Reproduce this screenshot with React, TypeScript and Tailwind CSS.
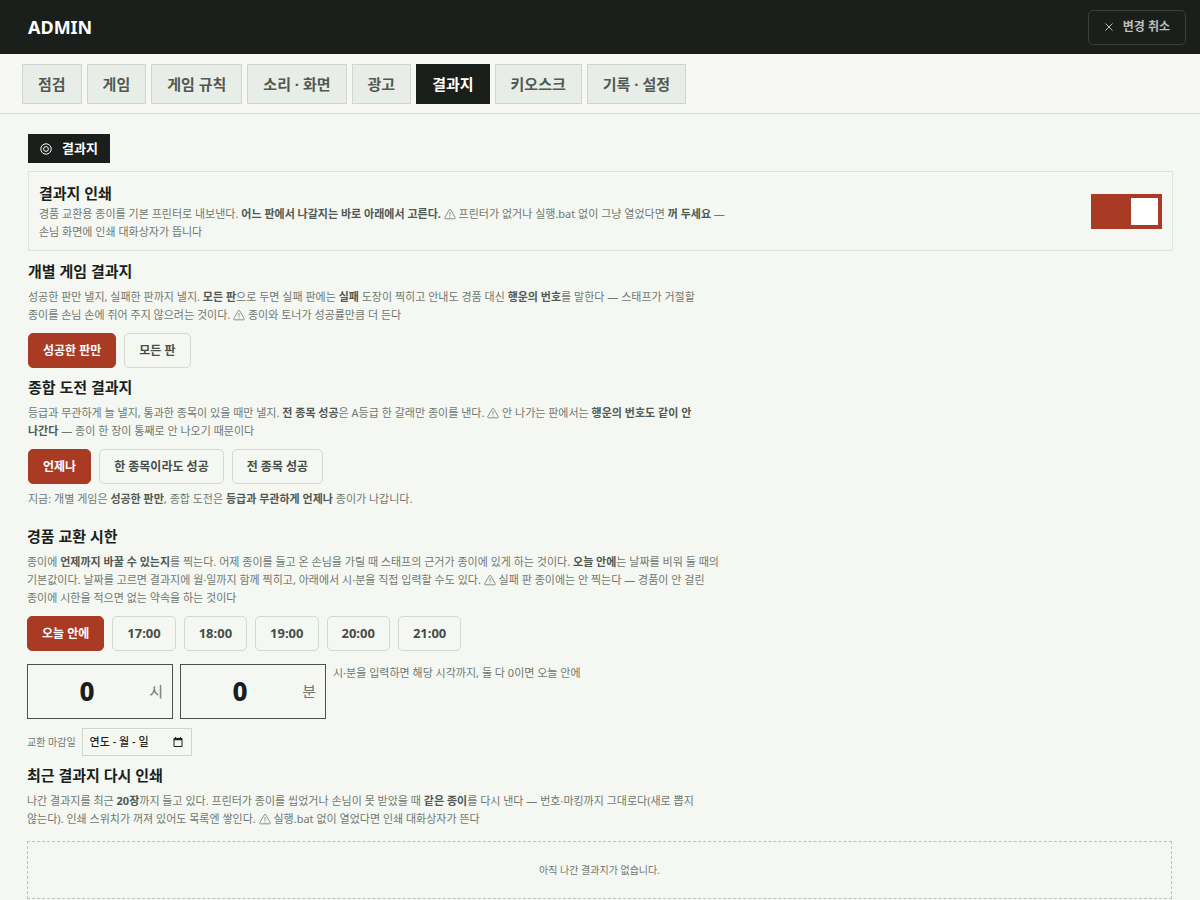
import { useState } from "react";
import type { ReactNode } from "react";

const tabs = ["점검", "게임", "게임 규칙", "소리 · 화면", "광고", "결과지", "키오스크", "기록 · 설정"];

const singleModes = ["성공한 판만", "모든 판"];
const totalModes = ["언제나", "한 종목이라도 성공", "전 종목 성공"];
const deadlines = ["오늘 안에", "17:00", "18:00", "19:00", "20:00", "21:00"];

// How each total mode reads in the summary sentence
const totalSummary: Record<string, string> = {
  "언제나": "등급과 무관하게 언제나",
  "한 종목이라도 성공": "한 종목이라도 성공하면",
  "전 종목 성공": "전 종목 성공일 때만",
};

const WarnIcon = () => (
  <svg
    viewBox="0 0 12 12"
    className="inline-block size-3 align-[-2px]"
    fill="none"
    stroke="currentColor"
    strokeWidth="0.8"
    strokeLinejoin="round"
    role="img"
    aria-label="주의"
  >
    <path d="M5.4 1.6Q6 .7 6.6 1.6L11.2 9.6Q11.6 10.7 10.6 10.8H1.4Q.4 10.7.8 9.6Z" />
    <path d="M6 4v3.6M6 8.6v1" />
  </svg>
);

const Strong = ({ children }: { children: ReactNode }) => (
  <strong className="font-bold text-[#505952]">{children}</strong>
);

const Title = ({ children }: { children: ReactNode }) => (
  <h2 className="text-[15px] leading-[22px] font-bold text-[#1a1f1b]">{children}</h2>
);

const Desc = ({ children }: { children: ReactNode }) => (
  <p className="mt-[6px] max-w-[694px] text-[11px] leading-[18px] break-keep text-[#6f7771]">{children}</p>
);

type ChoicesProps = {
  label: string;
  options: string[];
  value: string;
  onChange: (value: string) => void;
};

const Choices = ({ label, options, value, onChange }: ChoicesProps) => (
  <div role="group" aria-label={label} className="mt-[9px] flex flex-wrap gap-2">
    {options.map((option) => (
      <button
        key={option}
        type="button"
        aria-pressed={option === value}
        onClick={() => onChange(option)}
        className={`h-[35px] rounded-[5px] border px-[14px] font-bold ${
          option.includes(":") ? "text-[13px]" : "text-xs"
        } ${
          option === value
            ? "border-[#a93b24] bg-[#a93b24] text-white"
            : "border-[#d3d8d1] text-[#464e48]"
        }`}
      >
        {option}
      </button>
    ))}
  </div>
);

type TimeFieldProps = {
  unit: string;
  value: string;
  onChange: (value: string) => void;
};

const TimeField = ({ unit, value, onChange }: TimeFieldProps) => (
  <label className="flex h-[55px] w-[146px] items-center gap-3 border border-[#4b504c] px-[9px]">
    <input
      type="text"
      inputMode="numeric"
      value={value}
      onChange={(e) => onChange(e.target.value)}
      className="w-full min-w-0 bg-transparent text-center text-[26px] font-extrabold text-[#1a1f1b] outline-none"
    />
    <span className="text-[15px] text-[#6f7771]">{unit}</span>
  </label>
);

const App = () => {
  const [tab, setTab] = useState("결과지");
  const [printing, setPrinting] = useState(true);
  const [singleMode, setSingleMode] = useState("성공한 판만");
  const [totalMode, setTotalMode] = useState("언제나");
  const [deadline, setDeadline] = useState("오늘 안에");
  const [hour, setHour] = useState("0");
  const [minute, setMinute] = useState("0");
  const [date, setDate] = useState("");

  return (
    <div className="min-h-screen bg-[#f5f7f2] font-['Noto_Sans','Noto_Sans_CJK_KR',sans-serif]">
      <header className="flex h-[54px] items-center justify-between bg-[#1a1f1b] pr-[14px] pl-7">
        <h1 className="text-lg font-bold text-white">ADMIN</h1>
        <button
          type="button"
          className="flex h-[35px] items-center gap-[9px] rounded-[5px] border border-[#3a3f3b] px-[15px] text-xs font-bold text-[#bcbfbb]"
        >
          <svg viewBox="0 0 10 10" className="size-[10px]" fill="none" stroke="currentColor" aria-hidden="true">
            <path d="M1.5 1.5l7 7M8.5 1.5l-7 7" />
          </svg>
          변경 취소
        </button>
      </header>

      <nav className="flex flex-wrap gap-[5px] border-b border-[#d6dad4] bg-[#f7f8f4] px-[22px] pt-[10px] pb-[9px]">
        {tabs.map((name) => (
          <button
            key={name}
            type="button"
            onClick={() => setTab(name)}
            className={`h-10 border px-[15px] text-[15px] font-bold ${
              name === tab
                ? "border-[#1a1f1b] bg-[#1a1f1b] text-white"
                : "border-[#d0d5ce] bg-[#e9ede7] text-[#505952]"
            }`}
          >
            {name}
          </button>
        ))}
      </nav>

      <main className="pt-5">
        <div className="pr-[27px] pl-7">
          <div className="inline-flex h-[29px] items-center gap-[10px] bg-[#1a1f1b] px-3 text-[13px] font-bold text-white">
            <svg viewBox="0 0 12 12" className="size-3" fill="none" stroke="currentColor" aria-hidden="true">
              <circle cx="6" cy="6" r="5.2" />
              <circle cx="6" cy="6" r="2.4" />
            </svg>
            결과지
          </div>

          {/* Print on/off */}
          <section className="mt-2 flex items-center justify-between gap-4 border border-[#dfe3dd] px-[10px] pt-[10px] pb-[9px]">
            <div>
              <h2 id="print-title" className="text-[15px] leading-[22px] font-bold text-[#1a1f1b]">
                결과지 인쇄
              </h2>
              <p className="mt-px max-w-[694px] text-[11px] leading-[18px] break-keep text-[#6f7771]">
                경품 교환용 종이를 기본 프린터로 내보낸다.{" "}
                <Strong>어느 판에서 나갈지는 바로 아래에서 고른다.</Strong> <WarnIcon /> 프린터가
                없거나 실행.bat 없이 그냥 열었다면 <Strong>꺼 두세요</Strong> — 손님 화면에 인쇄
                대화상자가 뜹니다
              </p>
            </div>
            <input
              type="checkbox"
              role="switch"
              aria-labelledby="print-title"
              checked={printing}
              onChange={(e) => setPrinting(e.target.checked)}
              className="flex h-[35px] w-[71px] shrink-0 appearance-none items-center bg-[#b9beb8] px-1 before:size-[27px] before:bg-white checked:justify-end checked:bg-[#a93b24]"
            />
          </section>

          <section className="mt-[9px]">
            <Title>개별 게임 결과지</Title>
            <Desc>
              성공한 판만 낼지, 실패한 판까지 낼지. <Strong>모든 판</Strong>으로 두면 실패 판에는{" "}
              <Strong>실패</Strong> 도장이 찍히고 안내도 경품 대신 <Strong>행운의 번호</Strong>를
              말한다 — 스태프가 거절할 종이를 손님 손에 쥐어 주지 않으려는 것이다. <WarnIcon /> 종이와
              토너가 성공률만큼 더 든다
            </Desc>
            <Choices label="개별 게임 결과지" options={singleModes} value={singleMode} onChange={setSingleMode} />
          </section>

          <section className="mt-2">
            <Title>종합 도전 결과지</Title>
            <Desc>
              등급과 무관하게 늘 낼지, 통과한 종목이 있을 때만 낼지. <Strong>전 종목 성공</Strong>은
              A등급 한 갈래만 종이를 낸다. <WarnIcon /> 안 나가는 판에서는{" "}
              <Strong>행운의 번호도 같이 안 나간다</Strong> — 종이 한 장이 통째로 안 나오기 때문이다
            </Desc>
            <Choices label="종합 도전 결과지" options={totalModes} value={totalMode} onChange={setTotalMode} />
            <Desc>
              지금: 개별 게임은 <Strong>{singleMode}</Strong>, 종합 도전은{" "}
              <Strong>{totalSummary[totalMode]}</Strong> 종이가 나갑니다.
            </Desc>
          </section>
        </div>

        <div className="pr-7 pl-[27px]">
          {/* Prize deadline */}
          <section className="mt-[17px]">
            <Title>경품 교환 시한</Title>
            <Desc>
              종이에 <Strong>언제까지 바꿀 수 있는지</Strong>를 찍는다. 어제 종이를 들고 온 손님을
              가릴 때 스태프의 근거가 종이에 있게 하는 것이다. <Strong>오늘 안에</Strong>는 날짜를
              비워 둘 때의 기본값이다. 날짜를 고르면 결과지에 월·일까지 함께 찍히고, 아래에서 시·분을
              직접 입력할 수도 있다. <WarnIcon /> 실패 판 종이에는 안 찍는다 — 경품이 안 걸린 종이에
              시한을 적으면 없는 약속을 하는 것이다
            </Desc>
            <Choices label="경품 교환 시한" options={deadlines} value={deadline} onChange={setDeadline} />

            <div className="mt-[13px] flex items-start gap-[7px]">
              <TimeField unit="시" value={hour} onChange={setHour} />
              <TimeField unit="분" value={minute} onChange={setMinute} />
              <p className="text-[11px] leading-[18px] text-[#6f7771]">
                시·분을 입력하면 해당 시각까지, 둘 다 0이면 오늘 안에
              </p>
            </div>

            <div className="mt-[9px] flex items-center gap-[6px] text-[#6f7771]">
              <label htmlFor="deadline-date" className="text-[10px]">
                교환 마감일
              </label>
              <div className="flex h-7 w-[110px] items-center border border-[#d0d5ce] px-[7px] text-[#1a1f1b]">
                <input
                  id="deadline-date"
                  type="text"
                  value={date}
                  placeholder="연도 - 월 - 일"
                  onChange={(e) => setDate(e.target.value)}
                  className="w-full min-w-0 bg-transparent text-[11px] font-medium outline-none placeholder:text-[#1a1f1b]"
                />
                <svg viewBox="0 0 10 10" className="mr-px size-[10px] shrink-0" aria-hidden="true">
                  <path
                    fill="currentColor"
                    fillRule="evenodd"
                    d="M2 0h1v1h4V0h1v1h.5a1 1 0 0 1 1 1v7a1 1 0 0 1-1 1h-7a1 1 0 0 1-1-1V2a1 1 0 0 1 1-1H2ZM1.5 3.2V9h7V3.2Z"
                  />
                </svg>
              </div>
            </div>
          </section>

          {/* Reprint list */}
          <section className="mt-2">
            <Title>최근 결과지 다시 인쇄</Title>
            <Desc>
              나간 결과지를 최근 <Strong>20장</Strong>까지 들고 있다. 프린터가 종이를 씹었거나 손님이
              못 받았을 때 <Strong>같은 종이</Strong>를 다시 낸다 — 번호·마킹까지 그대로다(새로 뽑지
              않는다). 인쇄 스위치가 꺼져 있어도 목록엔 쌓인다. <WarnIcon /> 실행.bat 없이 열었다면
              인쇄 대화상자가 뜬다
            </Desc>
            <p className="mt-[13px] border border-dashed border-[#bcc3bb] py-[19px] text-center text-[10px] leading-[18px] text-[#6f7771]">
              아직 나간 결과지가 없습니다.
            </p>
          </section>
        </div>
      </main>
    </div>
  );
};

export default App;
